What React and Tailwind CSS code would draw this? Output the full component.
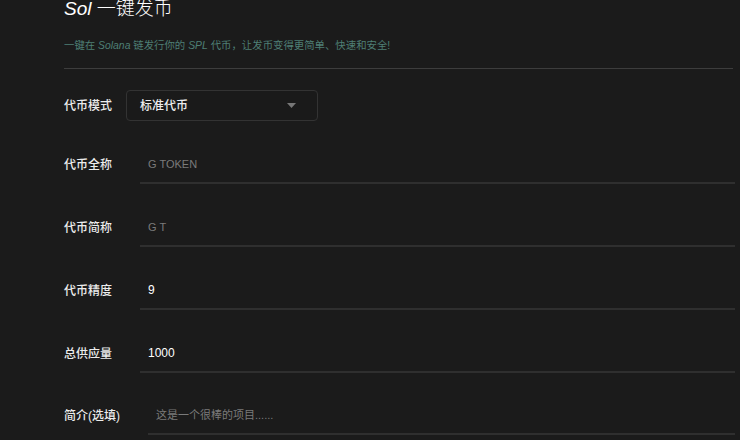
import React, { useState } from "react";

const font = { fontFamily: '"Liberation Sans", "Noto Sans CJK SC", sans-serif' };

const Row = ({ label, children, labelW = "w-[76px]" }) => (
  <div className="flex items-center">
    <label className={`${labelW} shrink-0 text-[12px] font-medium text-[#ececec]`}>{label}</label>
    {children}
  </div>
);

const LineInput = ({ value, placeholder, onChange }) => (
  <input
    type="text"
    value={value}
    placeholder={placeholder}
    onChange={(e) => onChange(e.target.value)}
    className="flex-1 h-[38px] px-2 bg-transparent border-b-2 border-[#2f2f2f] text-[12px] text-white placeholder:text-[11px] placeholder:text-[#7a7a7a] outline-none"
    style={font}
  />
);

const App = () => {
  const [name, setName] = useState("");
  const [symbol, setSymbol] = useState("");
  const [decimals, setDecimals] = useState("9");
  const [supply, setSupply] = useState("1000");
  const [desc, setDesc] = useState("");

  return (
    <div className="w-[740px] h-[440px] overflow-hidden bg-[#1b1b1b]" style={font}>
      <div className="pl-[64px] pr-[5px]">
        {/* Header */}
        <h1 className="-mt-[3px] text-[19px] leading-[24px] font-light text-white">
          <span className="italic">Sol</span> 一键发币
        </h1>
        <p className="mt-[18px] text-[10.4px] leading-[14px] text-[#4e7f75]">
          一键在 <span className="italic">Solana</span> 链发行你的 <span className="italic">SPL</span> 代币，让发币变得更简单、快速和安全!
        </p>
        <div className="mt-[15px] border-t border-[#3d3d3d] mr-[2px]" />

        {/* Form */}
        <div className="mt-[21px]">
          <Row label="代币模式" labelW="w-[62px]">
            <button className="w-[192px] h-[31px] flex items-center justify-between pl-[13px] pr-[21px] rounded-[4px] border border-[#333] bg-[#1a1a1a] text-[12px] font-medium text-[#ededed]">
              标准代币
              <svg width="9" height="5" viewBox="0 0 9 5">
                <path d="M0 0h9L4.5 5z" fill="#777" />
              </svg>
            </button>
          </Row>

          <div className="mt-[25px]">
            <Row label="代币全称">
              <LineInput value={name} placeholder="G TOKEN" onChange={setName} />
            </Row>
          </div>
          <div className="mt-[25px]">
            <Row label="代币简称">
              <LineInput value={symbol} placeholder="G T" onChange={setSymbol} />
            </Row>
          </div>
          <div className="mt-[25px]">
            <Row label="代币精度">
              <LineInput value={decimals} placeholder="" onChange={setDecimals} />
            </Row>
          </div>
          <div className="mt-[25px]">
            <Row label="总供应量">
              <LineInput value={supply} placeholder="" onChange={setSupply} />
            </Row>
          </div>
          <div className="mt-[24px]">
            <Row label="简介(选填)" labelW="w-[84px]">
              <LineInput value={desc} placeholder="这是一个很棒的项目......" onChange={setDesc} />
            </Row>
          </div>
        </div>
      </div>
    </div>
  );
};

export default App;
